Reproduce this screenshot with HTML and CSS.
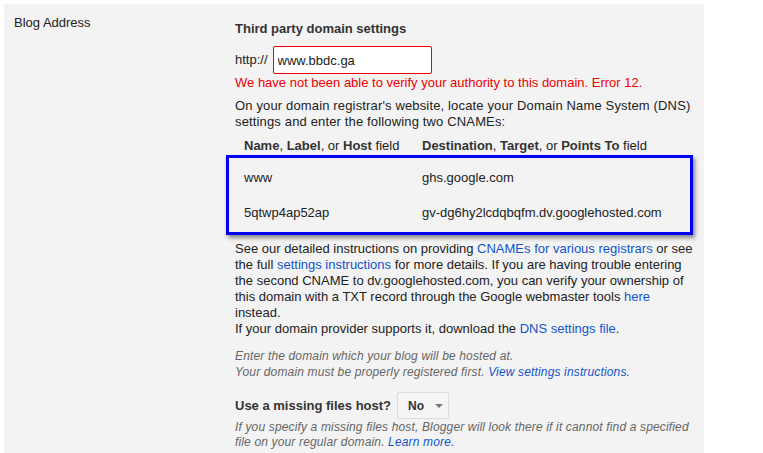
FILE: index.html
```html
<!DOCTYPE html>
<html lang="en">
<head>
  <meta charset="UTF-8">
  <title>Blog Address settings</title>
  <link rel="stylesheet" href="styles.css">
</head>
<body>
  <div class="panel">
    <div class="label">Blog Address</div>

    <div class="content">
      <h3>Third party domain settings</h3>

      <div class="url-row">
        <span class="prefix">http://</span>
        <input type="text" class="domain-input" value="www.bbdc.ga">
      </div>

      <p class="error">We have not been able to verify your authority to this domain. Error 12.</p>

      <p class="intro">On your domain registrar's website, locate your Domain Name System (DNS) settings and enter the following two CNAMEs:</p>

      <div class="cname-head">
        <div class="col"><b>Name</b>, <b>Label</b>, or <b>Host</b> field</div>
        <div class="col"><b>Destination</b>, <b>Target</b>, or <b>Points To</b> field</div>
      </div>

      <div class="cname-box">
        <div class="cname-row">
          <div class="col">www</div>
          <div class="col">ghs.google.com</div>
        </div>
        <div class="cname-row">
          <div class="col">5qtwp4ap52ap</div>
          <div class="col">gv-dg6hy2lcdqbqfm.dv.googlehosted.com</div>
        </div>
      </div>

      <p class="details">
        See our detailed instructions on providing <a href="#">CNAMEs for various registrars</a> or see
        the full <a href="#">settings instructions</a> for more details. If you are having trouble entering
        the second CNAME to dv.googlehosted.com, you can verify your ownership of
        this domain with a TXT record through the Google webmaster tools <a href="#">here</a>
        instead.<br>
        If your domain provider supports it, download the <a href="#">DNS settings file</a>.
      </p>

      <p class="hint">
        Enter the domain which your blog will be hosted at.<br>
        Your domain must be properly registered first. <a href="#">View settings instructions.</a>
      </p>

      <div class="missing-row">
        <span class="missing-label">Use a missing files host?</span>
        <div class="select-btn">No <span class="caret"></span></div>
      </div>

      <p class="hint hint-last">
        If you specify a missing files host, Blogger will look there if it cannot find a specified
        file on your regular domain. <a href="#">Learn more.</a>
      </p>
    </div>
  </div>
</body>
</html>
```

FILE: styles.css
```css
html, body {
  margin: 0;
  padding: 0;
  background: #fff;
}
body {
  font-family: Arial, "Liberation Sans", sans-serif;
  font-size: 13px;
  line-height: 16px;
  color: #222;
}
.panel {
  display: flex;
  width: 700px;
  height: 449px;
  margin: 4px 0 0 4px;
  background: #f3f3f3;
}
.label {
  width: 221px;
  padding: 11px 0 0 10px;
  color: #222;
}
.content {
  width: 460px;
  padding-top: 17px;
}
h3 {
  margin: 0;
  font-size: 13px;
  line-height: 16px;
  font-weight: bold;
  color: #333;
}
p {
  margin: 0;
}
a {
  color: #15c;
  text-decoration: none;
}
.url-row {
  display: flex;
  align-items: center;
  margin-top: 9px;
}
.prefix {
  margin-right: 5px;
}
.domain-input {
  width: 149px;
  height: 26px;
  padding: 0 4px;
  border: 1px solid #e00;
  border-radius: 2px;
  background: #fff;
  font-family: inherit;
  font-size: 13px;
  color: #222;
  outline: none;
}
.error {
  margin-top: 1px;
  color: #e00;
}
.intro {
  margin-top: 7px;
  letter-spacing: 0.15px;
}
.cname-head {
  display: flex;
  margin-top: 8px;
  padding-left: 9px;
  color: #222;
}
.cname-head b {
  color: #333;
}
.col {
  width: 178px;
  white-space: nowrap;
}
.cname-box {
  width: 467px;
  margin: 1px 0 0 -9px;
  padding: 0 0 4px 15px;
  border: 3px solid #0000f5;
  box-sizing: border-box;
  box-shadow: 2px 3px 4px rgba(0, 0, 0, 0.45);
}
.cname-row {
  display: flex;
  padding: 12px 0 7px;
}
.details {
  margin-top: 6px;
}
.hint {
  margin-top: 11px;
  font-size: 12px;
  font-style: italic;
  color: #666;
  letter-spacing: 0.15px;
}
.missing-row {
  display: flex;
  align-items: center;
  margin-top: 12px;
}
.missing-label {
  font-weight: bold;
  color: #333;
  margin-right: 6px;
}
.select-btn {
  display: flex;
  align-items: center;
  box-sizing: border-box;
  width: 52px;
  height: 27px;
  padding-left: 10px;
  border: 1px solid #dcdcdc;
  border-radius: 2px;
  background: #f5f5f5;
  font-size: 12px;
  font-weight: bold;
  color: #333;
}
.caret {
  width: 0;
  height: 0;
  margin-left: 11px;
  border-left: 4px solid transparent;
  border-right: 4px solid transparent;
  border-top: 4px solid #777;
}
.hint-last {
  margin-top: 1px;
  line-height: 15px;
}
```
